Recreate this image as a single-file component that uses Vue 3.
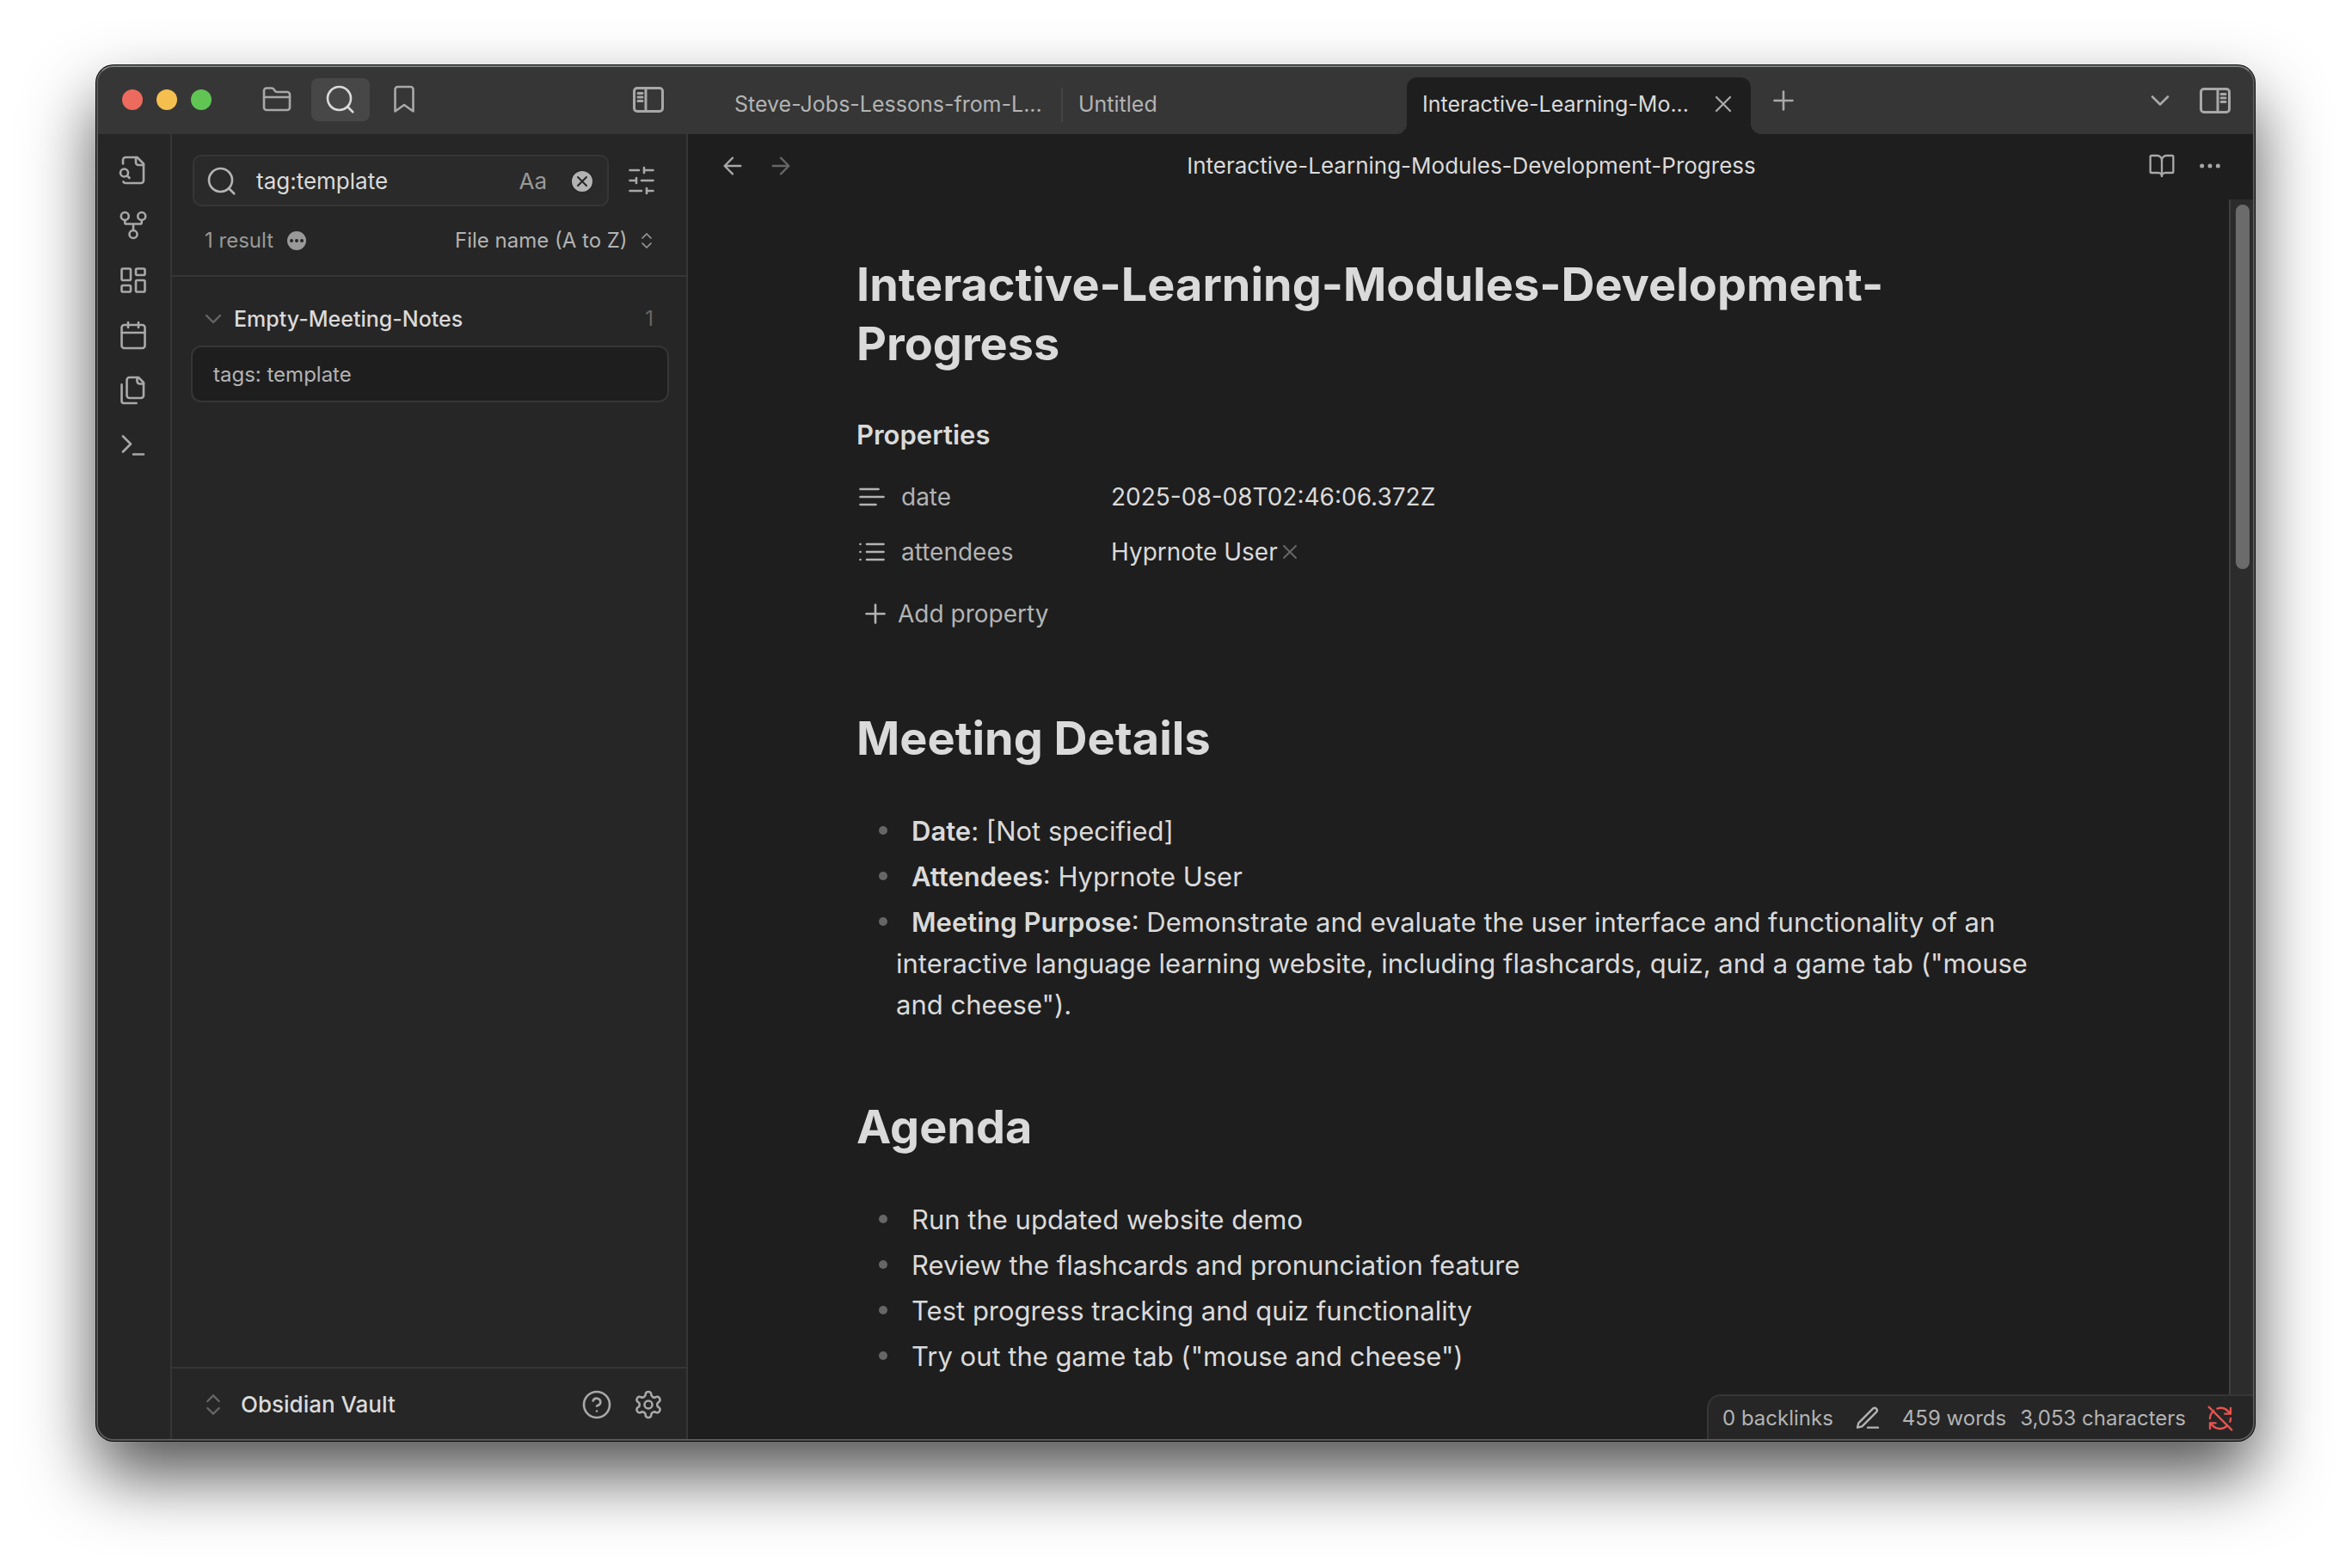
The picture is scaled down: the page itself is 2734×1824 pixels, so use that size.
<template>
  <div class="desktop">
    <div class="window">
      <header class="titlebar">
        <div class="titlebar-left">
          <div class="traffic-lights">
            <span class="light red"></span>
            <span class="light yellow"></span>
            <span class="light green"></span>
          </div>
          <button
            v-for="item in sidebarTabs"
            :key="item.icon"
            class="bar-button"
            :class="{ active: item.icon === activeSidebarTab }"
            :aria-label="item.label"
            @click="activeSidebarTab = item.icon"
          >
            <Icon :name="item.icon" />
          </button>
          <button class="bar-button sidebar-toggle" aria-label="Collapse left sidebar">
            <svg class="panel-icon" viewBox="0 0 36 30">
              <rect x="1.5" y="1.5" width="33" height="27" rx="3.5" />
              <path d="M15 2v26M6 7.5h5M6 12h5M6 16.5h5" />
            </svg>
          </button>
        </div>

        <div class="titlebar-right">
          <div class="tabs">
            <div
              v-for="tab in tabs"
              :key="tab.id"
              class="tab"
              :class="{ active: tab.id === activeTab, divided: tab.divided }"
            >
              <span class="tab-title">{{ tab.title }}</span>
              <button v-if="tab.id === activeTab" class="icon-button" aria-label="Close">
                <Icon name="x" class="md" />
              </button>
            </div>
          </div>
          <button class="icon-button new-tab" aria-label="New tab"><Icon name="plus" /></button>
          <div class="titlebar-actions">
            <button class="icon-button" aria-label="Tab list"><Icon name="chevronDown" /></button>
            <button class="icon-button" aria-label="Expand right sidebar">
              <svg class="panel-icon" viewBox="0 0 36 30">
                <rect x="1.5" y="1.5" width="33" height="27" rx="3.5" />
                <path d="M21 2v26M25 7.5h5M25 12h5M25 16.5h5" />
              </svg>
            </button>
          </div>
        </div>
      </header>

      <div class="workspace">
        <nav class="ribbon">
          <button v-for="item in ribbon" :key="item.icon" class="icon-button" :aria-label="item.label">
            <Icon :name="item.icon" />
          </button>
        </nav>

        <aside class="sidebar">
          <div class="search-row">
            <div class="search-box">
              <Icon name="search" />
              <input v-model="query" class="search-input" type="text" aria-label="Search" />
              <button class="match-case" aria-label="Match case">Aa</button>
              <button class="icon-button" aria-label="Clear search" @click="query = ''">
                <svg class="clear-icon" viewBox="0 0 26 26">
                  <circle cx="13" cy="13" r="13" />
                  <path d="M8 8l10 10M18 8L8 18" />
                </svg>
              </button>
            </div>
            <button class="icon-button" aria-label="Search settings"><Icon name="sliders" /></button>
          </div>

          <div class="search-info">
            <span>1 result</span>
            <svg class="more-badge" viewBox="0 0 22 22">
              <circle class="badge-bg" cx="11" cy="11" r="11" />
              <circle cx="5" cy="11" r="2" />
              <circle cx="11" cy="11" r="2" />
              <circle cx="17" cy="11" r="2" />
            </svg>
            <select v-model="sortOrder" class="sort-select" aria-label="Sort order">
              <option>File name (A to Z)</option>
              <option>File name (Z to A)</option>
            </select>
            <Icon name="chevronsUpDown" class="xs" />
          </div>

          <div class="results">
            <div class="result-title">
              <Icon name="chevronDown" class="md faint" />
              <span class="result-name">Empty-Meeting-Notes</span>
              <span class="result-count">1</span>
            </div>
            <div class="result-match">tags: template</div>
          </div>

          <footer class="vault">
            <button class="vault-switcher">
              <Icon name="chevronsUpDown" class="md faint" />
              <span>Obsidian Vault</span>
            </button>
            <button class="icon-button" aria-label="Help"><Icon name="help" /></button>
            <button class="icon-button" aria-label="Settings"><Icon name="settings" /></button>
          </footer>
        </aside>

        <main class="editor">
          <div class="view-header">
            <div class="view-nav">
              <button class="icon-button" aria-label="Back"><Icon name="arrowLeft" class="md" /></button>
              <button class="icon-button" aria-label="Forward"><Icon name="arrowRight" class="md faint" /></button>
            </div>
            <span class="view-title">Interactive-Learning-Modules-Development-Progress</span>
            <div class="view-actions">
              <button class="icon-button" aria-label="Reading view"><Icon name="bookOpen" class="md" /></button>
              <button class="icon-button" aria-label="More options"><Icon name="more" class="md" /></button>
            </div>
          </div>

          <div class="view-content">
            <div class="scroller">
              <article class="note">
                <h1 class="note-heading">Interactive-Learning-Modules-Development-Progress</h1>

                <section class="properties">
                  <h2 class="properties-heading">Properties</h2>
                  <div class="property">
                    <Icon name="text" />
                    <label class="property-key" for="property-date">date</label>
                    <input id="property-date" v-model="date" class="property-input" type="text" />
                  </div>
                  <div class="property">
                    <Icon name="list" />
                    <span class="property-key">attendees</span>
                    <span class="property-value">Hyprnote User</span>
                    <button class="icon-button" aria-label="Remove"><Icon name="x" class="sm faint" /></button>
                  </div>
                  <button class="add-property"><Icon name="plus" /><span>Add property</span></button>
                </section>

                <h2 class="note-heading section-heading">Meeting Details</h2>
                <ul class="note-list">
                  <li v-for="item in details" :key="item.label">
                    <strong>{{ item.label }}</strong>: {{ item.text }}
                  </li>
                </ul>

                <h2 class="note-heading section-heading">Agenda</h2>
                <ul class="note-list">
                  <li v-for="item in agenda" :key="item">{{ item }}</li>
                </ul>
              </article>
            </div>
            <div class="scrollbar"><div class="scrollbar-thumb"></div></div>
          </div>

          <div class="status-bar">
            <span>0 backlinks</span>
            <Icon name="pen" class="md" />
            <span class="words">459 words</span>
            <span class="characters">3,053 characters</span>
            <Icon name="syncOff" class="md error" />
          </div>
        </main>
      </div>
    </div>
  </div>
</template>

<script setup>
import { h, ref } from 'vue'

const paths = {
  folder: '<path d="M20 20a2 2 0 0 0 2-2V8a2 2 0 0 0-2-2h-7.900a2 2 0 0 1-1.690-.9L9.600 3.900A2 2 0 0 0 7.930 3H4a2 2 0 0 0-2 2v13a2 2 0 0 0 2 2Z"/><path d="M2 10h20"/>',
  search: '<circle cx="11" cy="11" r="9"/><path d="m21.500 21.500-4-4"/>',
  bookmark: '<path d="m19 21-7-5-7 5V4a2 2 0 0 1 2-2h10a2 2 0 0 1 2 2z"/>',
  x: '<path d="M18 6 6 18M6 6l12 12"/>',
  plus: '<path d="M5 12h14M12 5v14"/>',
  chevronDown: '<path d="m6 9 6 6 6-6"/>',
  chevronsUpDown: '<path d="m7 15 5 5 5-5M7 9l5-5 5 5"/>',
  fileSearch: '<path d="M14 2v4a2 2 0 0 0 2 2h4"/><path d="M4.300 21a2 2 0 0 0 1.700 1h12a2 2 0 0 0 2-2V7l-5-5H6a2 2 0 0 0-2 2v3"/><path d="m9 18-1.500-1.500"/><circle cx="5" cy="14" r="3"/>',
  gitFork: '<circle cx="12" cy="19" r="3"/><circle cx="5.500" cy="5" r="3"/><circle cx="18.500" cy="5" r="3"/><path d="M18.500 8v2c0 .6-.4 1-1 1h-11c-.6 0-1-.4-1-1V8M12 11v5"/>',
  dashboard: '<rect width="7" height="9" x="3" y="3" rx="1"/><rect width="7" height="5" x="14" y="3" rx="1"/><rect width="7" height="9" x="14" y="12" rx="1"/><rect width="7" height="5" x="3" y="16" rx="1"/>',
  calendar: '<path d="M8 2v4M16 2v4M3 10h18"/><rect width="18" height="18" x="3" y="4" rx="2"/>',
  files: '<path d="M20 7h-3a2 2 0 0 1-2-2V2"/><path d="M9 18a2 2 0 0 1-2-2V4a2 2 0 0 1 2-2h7l4 4v10a2 2 0 0 1-2 2Z"/><path d="M3 7.600v12.800A1.600 1.600 0 0 0 4.600 22h9.800"/>',
  terminal: '<path d="m4 17 6-6-6-6M12 19h8"/>',
  sliders: '<path d="M21 4h-7M10 4H3M21 12h-9M8 12H3M21 20h-5M12 20H3M14 2v4M8 10v4M16 18v4"/>',
  help: '<circle cx="12" cy="12" r="10"/><path d="M9.100 9a3 3 0 0 1 5.800 1c0 2-2.900 3-2.900 3M12 17h.01"/>',
  settings: '<path d="M12.220 2h-.44a2 2 0 0 0-2 2v.18a2 2 0 0 1-1 1.730l-.43.25a2 2 0 0 1-2 0l-.15-.08a2 2 0 0 0-2.730.73l-.22.38a2 2 0 0 0 .73 2.730l.15.1a2 2 0 0 1 1 1.720v.51a2 2 0 0 1-1 1.740l-.15.09a2 2 0 0 0-.73 2.730l.22.38a2 2 0 0 0 2.730.73l.15-.08a2 2 0 0 1 2 0l.43.25a2 2 0 0 1 1 1.730V20a2 2 0 0 0 2 2h.44a2 2 0 0 0 2-2v-.18a2 2 0 0 1 1-1.730l.43-.25a2 2 0 0 1 2 0l.15.08a2 2 0 0 0 2.730-.73l.22-.39a2 2 0 0 0-.73-2.730l-.15-.08a2 2 0 0 1-1-1.740v-.5a2 2 0 0 1 1-1.740l.15-.09a2 2 0 0 0 .73-2.730l-.22-.38a2 2 0 0 0-2.730-.73l-.15.08a2 2 0 0 1-2 0l-.43-.25a2 2 0 0 1-1-1.730V4a2 2 0 0 0-2-2z"/><circle cx="12" cy="12" r="3"/>',
  arrowLeft: '<path d="m12 19-7-7 7-7M19 12H5"/>',
  arrowRight: '<path d="m12 5 7 7-7 7M5 12h14"/>',
  bookOpen: '<path d="M12 7v14"/><path d="M3 18a1 1 0 0 1-1-1V4a1 1 0 0 1 1-1h5a4 4 0 0 1 4 4 4 4 0 0 1 4-4h5a1 1 0 0 1 1 1v13a1 1 0 0 1-1 1h-6a3 3 0 0 0-3 3 3 3 0 0 0-3-3z"/>',
  more: '<circle cx="12" cy="12" r="1"/><circle cx="19" cy="12" r="1"/><circle cx="5" cy="12" r="1"/>',
  text: '<path d="M17 6H3M21 12H3M15 18H3"/>',
  list: '<path d="M8 6h13M8 12h13M8 18h13M3 6h.01M3 12h.01M3 18h.01"/>',
  pen: '<path d="M12 20h9M16.500 3.500a2.120 2.120 0 0 1 3 3L7 19l-4 1 1-4Z"/>',
  syncOff: '<path d="M21 8 18.700 5.700A9 9 0 0 0 9.300 3.400M6.300 5.300A9 9 0 0 0 3 12M3 16l2.300 2.300A9 9 0 0 0 17.700 18.700M21 12c0 1-.2 2-.5 2.900M21 3v5h-5M8 16H3v5M2 2l20 20"/>'
}

// 24-unit stroke icons, sized through the md / sm / xs classes
const Icon = (props) =>
  h('svg', { class: 'icon', viewBox: '0 0 24 24', 'aria-hidden': 'true', innerHTML: paths[props.name] })
Icon.props = ['name']

const sidebarTabs = [
  { icon: 'folder', label: 'Files' },
  { icon: 'search', label: 'Search' },
  { icon: 'bookmark', label: 'Bookmarks' }
]
const activeSidebarTab = ref('search')

const ribbon = [
  { icon: 'fileSearch', label: 'Open quick switcher' },
  { icon: 'gitFork', label: 'Open graph view' },
  { icon: 'dashboard', label: 'Create new canvas' },
  { icon: 'calendar', label: "Open today's daily note" },
  { icon: 'files', label: 'Insert template' },
  { icon: 'terminal', label: 'Open command palette' }
]

const tabs = [
  { id: 1, title: 'Steve-Jobs-Lessons-from-L...', divided: true },
  { id: 2, title: 'Untitled' },
  { id: 3, title: 'Interactive-Learning-Mo...' }
]
const activeTab = ref(3)

const query = ref('tag:template')
const sortOrder = ref('File name (A to Z)')
const date = ref('2025-08-08T02:46:06.372Z')

const details = [
  { label: 'Date', text: '[Not specified]' },
  { label: 'Attendees', text: 'Hyprnote User' },
  {
    label: 'Meeting Purpose',
    text: 'Demonstrate and evaluate the user interface and functionality of an interactive language learning website, including flashcards, quiz, and a game tab ("mouse and cheese").'
  }
]

const agenda = [
  'Run the updated website demo',
  'Review the flashcards and pronunciation feature',
  'Test progress tracking and quiz functionality',
  'Try out the game tab ("mouse and cheese")'
]
</script>

<style>
body {
  background: #ffffff;
}
</style>

<style scoped>
* {
  box-sizing: border-box;
}

.desktop {
  display: flex;
  min-height: 100vh;
  padding: 76px 112px 148px;
  overflow: hidden;
  font-family: Inter, "Liberation Sans", sans-serif;
  font-size: 26px;
  line-height: 36px;
  color: #dadada;
}

button,
input,
select {
  padding: 0;
  border: none;
  outline: none;
  background: none;
  font: inherit;
  color: inherit;
}

.window {
  position: relative;
  flex: 1;
  min-width: 0;
  display: flex;
  flex-direction: column;
  border-radius: 20px;
  overflow: hidden;
  background: #1e1e1e;
  box-shadow: 0 0 0 1px #000000, 0 40px 80px rgba(0, 0, 0, 0.68);
}

/* light rim drawn over the window edge */
.window::after {
  content: "";
  position: absolute;
  inset: 0;
  border: 2px solid #5a5a5a;
  border-top-color: #7c807c;
  border-radius: 20px;
  pointer-events: none;
}

.icon {
  flex: none;
  display: block;
  width: 36px;
  height: 36px;
  fill: none;
  stroke: currentColor;
  stroke-width: 1.75;
  stroke-linecap: round;
  stroke-linejoin: round;
}

.icon.md {
  width: 32px;
  height: 32px;
}

.icon.sm {
  width: 28px;
  height: 28px;
}

.icon.xs {
  width: 24px;
  height: 24px;
}

.icon.faint {
  color: #666666;
}

.icon.error {
  color: #e9534f;
}

.icon-button {
  display: flex;
  flex: none;
  color: #a8a8a8;
}

.panel-icon {
  display: block;
  width: 36px;
  height: 30px;
  fill: none;
  stroke: #a8a8a8;
  stroke-width: 3;
  stroke-linecap: round;
}

/* title bar */
.titlebar {
  flex: none;
  display: flex;
  height: 80px;
  background: #363636;
}

.titlebar-left {
  flex: none;
  display: flex;
  align-items: center;
  gap: 6px;
  width: 688px;
  padding: 0 12px 0 30px;
}

.traffic-lights {
  display: flex;
  gap: 16px;
  margin-right: 36px;
}

.light {
  width: 24px;
  height: 24px;
  border-radius: 50%;
}

.light.red {
  background: #ed6a5e;
}

.light.yellow {
  background: #f5bf4f;
}

.light.green {
  background: #61c554;
}

.bar-button {
  display: flex;
  align-items: center;
  justify-content: center;
  width: 68px;
  height: 50px;
  border-radius: 8px;
  color: #a8a8a8;
}

.bar-button.active {
  background: #474747;
  color: #dadada;
}

.sidebar-toggle {
  margin-left: auto;
}

.titlebar-right {
  flex: 1;
  min-width: 0;
  display: flex;
  align-items: center;
  padding: 2px 28px 0 36px;
}

.tabs {
  display: flex;
  align-self: flex-end;
  flex: 0 1 1200px;
  min-width: 0;
}

.tab {
  position: relative;
  flex: 1;
  min-width: 0;
  display: flex;
  align-items: center;
  justify-content: space-between;
  height: 66px;
  padding: 0 16px 4px 18px;
  font-size: 25px;
  color: #b3b3b3;
  white-space: nowrap;
}

.tab.divided::before {
  content: "";
  position: absolute;
  right: 0;
  top: 12px;
  width: 2px;
  height: 40px;
  background: #424242;
}

.tab.active {
  border-radius: 12px 12px 0 0;
  background: #1e1e1e;
  color: #dadada;
}

/* flared feet of the active tab */
.tab.active::before,
.tab.active::after {
  content: "";
  position: absolute;
  bottom: 0;
  width: 12px;
  height: 12px;
}

.tab.active::before {
  right: 100%;
  background: radial-gradient(circle at 0 0, transparent 12px, #1e1e1e 12px);
}

.tab.active::after {
  left: 100%;
  background: radial-gradient(circle at 100% 0, transparent 12px, #1e1e1e 12px);
}

.new-tab {
  margin-left: 20px;
}

.titlebar-actions {
  display: flex;
  align-items: center;
  gap: 28px;
  margin-left: auto;
}

/* workspace */
.workspace {
  flex: 1;
  display: flex;
  min-height: 0;
}

.ribbon {
  flex: none;
  display: flex;
  flex-direction: column;
  align-items: center;
  gap: 28px;
  width: 88px;
  padding-top: 24px;
  border-right: 2px solid #363636;
  background: #262626;
}

.sidebar {
  flex: none;
  display: flex;
  flex-direction: column;
  width: 600px;
  border-right: 2px solid #363636;
  background: #262626;
}

.search-row {
  display: flex;
  align-items: center;
  gap: 20px;
  padding: 24px 34px 0 24px;
}

.search-box {
  flex: 1;
  min-width: 0;
  display: flex;
  align-items: center;
  height: 60px;
  padding: 2px 16px 0 14px;
  border: 2px solid #363636;
  border-radius: 10px;
  background: #2a2a2a;
  color: #b3b3b3;
}

.search-input {
  flex: 1;
  min-width: 0;
  margin-left: 22px;
  color: #dadada;
}

.match-case {
  margin-right: 28px;
  color: #999999;
}

.clear-icon {
  display: block;
  width: 26px;
  height: 26px;
  fill: #b3b3b3;
  stroke: #262626;
  stroke-width: 2;
  stroke-linecap: round;
}

.search-info {
  display: flex;
  align-items: center;
  height: 82px;
  padding: 0 34px 0 38px;
  border-bottom: 2px solid #363636;
  font-size: 24px;
  color: #999999;
}

.more-badge {
  width: 22px;
  height: 22px;
  margin-left: 16px;
  fill: #262626;
}

.more-badge .badge-bg {
  fill: #999999;
}

.sort-select {
  appearance: none;
  margin: 0 10px 0 auto;
  color: #b3b3b3;
}

.results {
  flex: 1;
  padding: 32px 20px 0 22px;
}

.result-title {
  display: flex;
  align-items: center;
  height: 34px;
  margin-bottom: 14px;
  padding: 0 18px 0 10px;
  font-size: 25px;
  font-weight: 500;
}

.result-name {
  flex: 1;
  margin-left: 8px;
}

.result-count {
  font-size: 24px;
  font-weight: 400;
  color: #666666;
}

.result-match {
  height: 66px;
  padding: 14px 24px;
  border: 2px solid #363636;
  border-radius: 12px;
  background: #1e1e1e;
  font-size: 24px;
  color: #b3b3b3;
}

.vault {
  display: flex;
  align-items: center;
  gap: 24px;
  height: 86px;
  padding: 0 26px 0 32px;
  border-top: 2px solid #363636;
}

.vault-switcher {
  flex: 1;
  display: flex;
  align-items: center;
  gap: 16px;
  font-weight: 500;
}

/* editor */
.editor {
  position: relative;
  flex: 1;
  min-width: 0;
  display: flex;
  flex-direction: column;
}

.view-header {
  flex: none;
  display: flex;
  align-items: center;
  justify-content: space-between;
  height: 76px;
  padding: 0 36px 2px;
}

.view-nav,
.view-actions {
  display: flex;
  gap: 24px;
}

.view-content {
  flex: 1;
  display: flex;
}

.scroller {
  flex: 1;
  min-width: 0;
}

.note {
  max-width: 1400px;
  margin: 0 auto;
  padding-top: 64px;
}

.note-heading {
  margin: 0;
  font-size: 54px;
  line-height: 69px;
  font-weight: 700;
}

.properties {
  padding: 48px 0 6px;
}

.properties-heading {
  margin: 0 0 16px;
  font-size: 31px;
  line-height: 48px;
  font-weight: 600;
}

.property {
  display: flex;
  align-items: center;
  height: 64px;
  font-size: 28px;
  color: #b3b3b3;
}

.property-key {
  flex: none;
  width: 244px;
  margin-left: 16px;
}

.property-input {
  flex: 1;
  color: #dadada;
}

.property-value {
  color: #dadada;
}

.add-property {
  display: flex;
  align-items: center;
  gap: 8px;
  height: 48px;
  margin-top: 16px;
  padding-left: 4px;
  font-size: 28px;
  color: #b3b3b3;
}

.section-heading {
  margin: 80px 0 48px;
}

.note-list {
  margin: 0;
  padding: 0 0 0 46px;
  list-style: none;
  font-size: 31px;
  line-height: 48px;
}

.note-list li {
  position: relative;
  padding: 2px 0 3px;
  text-indent: 18px;
}

.note-list li::before {
  content: "";
  position: absolute;
  left: -20px;
  top: 20px;
  width: 10px;
  height: 10px;
  border-radius: 50%;
  background: #666666;
}

.note-list strong {
  font-weight: 600;
}

.scrollbar {
  flex: none;
  width: 30px;
  padding: 6px 6px 0;
  border-left: 2px solid #3f3f3f;
  background: #2c2c2c;
}

.scrollbar-thumb {
  width: 16px;
  height: 424px;
  border-radius: 8px;
  background: #6b6b6b;
}

.status-bar {
  position: absolute;
  right: 0;
  bottom: 0;
  display: flex;
  align-items: center;
  height: 54px;
  padding: 0 24px 0 16px;
  border: 2px solid #363636;
  border-width: 2px 0 0 2px;
  border-radius: 16px 0 0 0;
  background: #262626;
  font-size: 24px;
  color: #b3b3b3;
}

.status-bar .icon {
  margin-left: 24px;
}

.words {
  margin-left: 24px;
}

.characters {
  margin-left: 16px;
}
</style>
